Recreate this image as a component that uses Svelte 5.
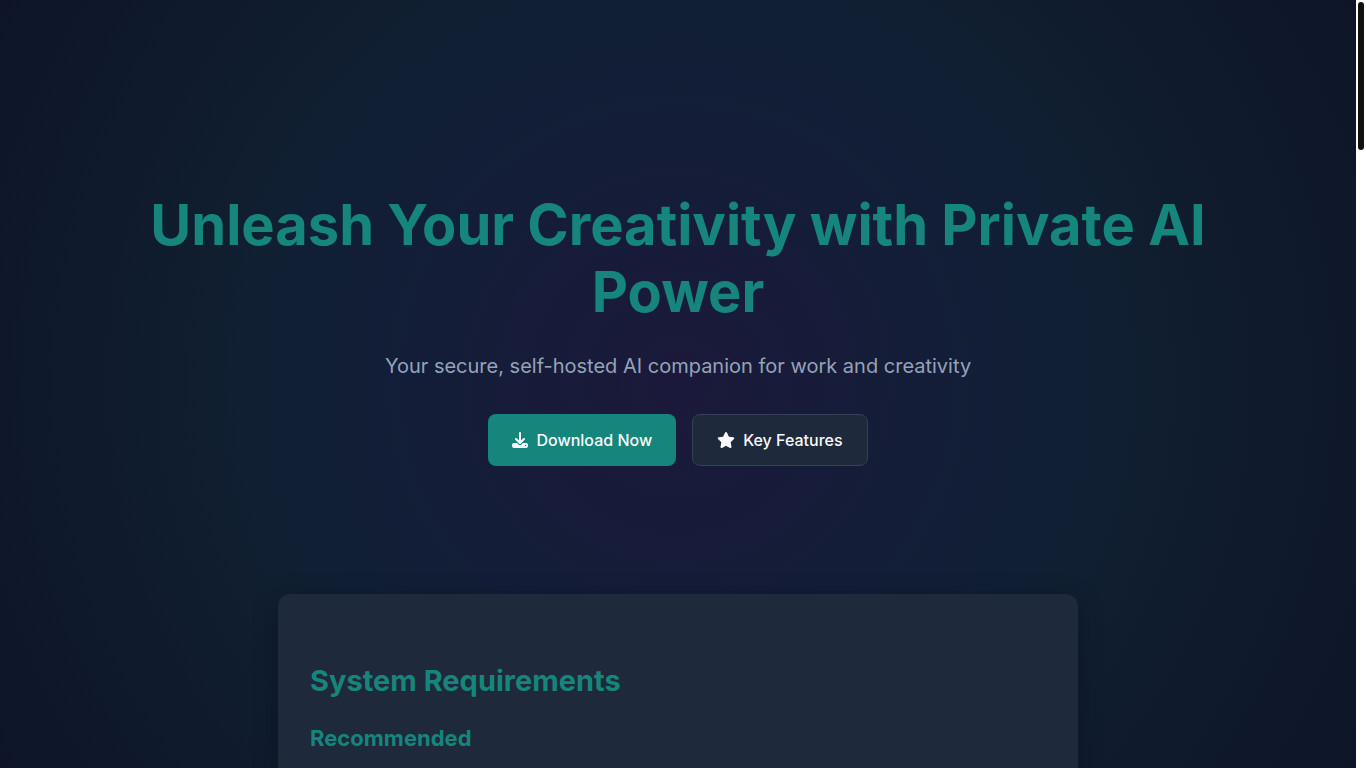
<script>
  const actions = [
    { label: 'Download Now', href: '#download', kind: 'primary', icon: 'download' },
    { label: 'Key Features', href: '#features', kind: 'secondary', icon: 'star' }
  ];
</script>

<div class="shell">
  <div class="page">
    <header class="hero">
      <h1>Unleash Your Creativity with Private AI Power</h1>
      <p>Your secure, self-hosted AI companion for work and creativity</p>
      <nav class="actions">
        {#each actions as action}
          <a class="btn {action.kind}" href={action.href}>
            {#if action.icon === 'download'}
              <svg viewBox="0 0 512 512" aria-hidden="true">
                <path d="M288 32c0-17.700-14.300-32-32-32s-32 14.300-32 32v242.700l-73.400-73.400c-12.500-12.500-32.800-12.500-45.300 0s-12.500 32.800 0 45.300l128 128c12.500 12.500 32.800 12.500 45.300 0l128-128c12.500-12.500 12.500-32.800 0-45.300s-32.800-12.500-45.300 0L288 274.700V32zM64 352c-35.300 0-64 28.700-64 64v32c0 35.300 28.700 64 64 64h384c35.300 0 64-28.700 64-64v-32c0-35.300-28.700-64-64-64H346.500l-45.300 45.300c-25 25-65.500 25-90.500 0L165.500 352H64zm368 56a24 24 0 1 1 0 48 24 24 0 1 1 0-48z" />
              </svg>
            {:else}
              <svg class="wide" viewBox="0 0 576 512" aria-hidden="true">
                <path d="M316.900 18C311.600 7 300.400 0 288.100 0s-23.400 7-28.800 18L195 150.300 51.400 171.500c-12 1.800-22 10.200-25.700 21.700s-.7 24.200 7.900 32.700L137.800 329 113.200 474.700c-2 12 3 24.200 12.900 31.300s23 8 33.800 2.300l128.300-68.500 128.300 68.500c10.800 5.700 23.900 4.900 33.800-2.300s14.900-19.300 12.900-31.300L438.500 329 542.700 225.900c8.600-8.500 11.700-21.200 7.900-32.700s-13.700-19.900-25.700-21.700L381.200 150.300 316.900 18z" />
              </svg>
            {/if}
            {action.label}
          </a>
        {/each}
      </nav>
    </header>
    <section class="card">
      <h2>System Requirements</h2>
      <h3>Recommended</h3>
    </section>
  </div>
  <div class="rail" aria-hidden="true"><div class="thumb"></div></div>
</div>

<style>
  :global(body) {
    margin: 0;
    overflow: hidden;
    background: #0f172a;
    font-family: Inter, sans-serif;
  }
  .shell {
    display: flex;
    height: 100vh;
    overflow: hidden;
  }
  .page {
    flex: 1;
    min-width: 0;
    overflow: hidden;
    background: radial-gradient(circle at center, #1b193b 0%, #141d38 30%, #101f35 50%, #101f31 56%, #0e1528 100%);
  }
  .hero {
    box-sizing: border-box;
    max-width: 1200px;
    margin: 0 auto;
    padding: 192px 32px 128px;
    text-align: center;
  }
  h1,
  h2,
  h3 {
    margin: 0;
    color: #16857c;
    font-weight: 700;
  }
  h1 {
    font-size: 56px;
    line-height: 67px;
  }
  .hero p {
    margin: 24px 0 32px;
    color: #94a3b8;
    font-size: 20px;
    line-height: 32px;
  }
  .actions {
    display: flex;
    flex-wrap: wrap;
    justify-content: center;
    gap: 16px;
  }
  .btn {
    display: inline-flex;
    align-items: center;
    gap: 8px;
    padding: 12px 24px;
    border-radius: 8px;
    color: #f8fafc;
    font-size: 16px;
    font-weight: 500;
    line-height: 28px;
    text-decoration: none;
  }
  .primary {
    background: #16857c;
  }
  .secondary {
    padding: 11px 24px;
    border: 1px solid #334155;
    background: #1e293b;
  }
  .btn svg {
    width: 16px;
    height: 16px;
    fill: currentColor;
  }
  .btn svg.wide {
    width: 18px;
  }
  .card {
    box-sizing: border-box;
    max-width: 800px;
    min-height: 100vh;
    margin: 0 auto;
    padding: 64px 32px;
    border-radius: 12px;
    background: #1e293b;
    box-shadow: 0 4px 24px rgba(0, 0, 0, 0.25);
  }
  h2 {
    margin-bottom: 16px;
    font-size: 29px;
    line-height: 46px;
  }
  h3 {
    font-size: 22px;
    line-height: 36px;
  }
  .rail {
    box-sizing: border-box;
    flex: none;
    width: 10px;
    padding: 2px;
    background: #fff;
  }
  .thumb {
    height: 148px;
    border-radius: 3px;
    background: #111;
  }
</style>
